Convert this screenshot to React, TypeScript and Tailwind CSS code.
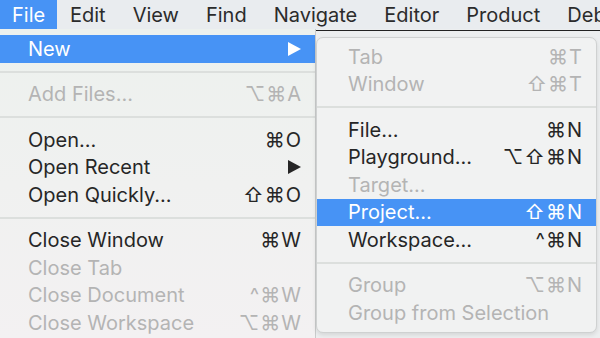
import { ReactNode } from 'react';

type Item = {
  label: string;
  shortcut?: string;
  disabled?: boolean;
  active?: boolean;
  submenu?: boolean;
};

const topMenus = ['Edit', 'View', 'Find', 'Navigate', 'Editor', 'Product', 'Debug'];

const fileMenu: (Item | 'sep')[] = [
  { label: 'New', submenu: true, active: true },
  'sep',
  { label: 'Add Files...', shortcut: '⌥⌘A', disabled: true },
  'sep',
  { label: 'Open...', shortcut: '⌘O' },
  { label: 'Open Recent', submenu: true },
  { label: 'Open Quickly...', shortcut: '⇧⌘O' },
  'sep',
  { label: 'Close Window', shortcut: '⌘W' },
  { label: 'Close Tab', disabled: true },
  { label: 'Close Document', shortcut: '^⌘W', disabled: true },
  { label: 'Close Workspace', shortcut: '⌥⌘W', disabled: true },
];

const newMenu: (Item | 'sep')[] = [
  { label: 'Tab', shortcut: '⌘T', disabled: true },
  { label: 'Window', shortcut: '⇧⌘T', disabled: true },
  'sep',
  { label: 'File...', shortcut: '⌘N' },
  { label: 'Playground...', shortcut: '⌥⇧⌘N' },
  { label: 'Target...', disabled: true },
  { label: 'Project...', shortcut: '⇧⌘N', active: true },
  { label: 'Workspace...', shortcut: '^⌘N' },
  'sep',
  { label: 'Group', shortcut: '⌥⌘N', disabled: true },
  { label: 'Group from Selection', disabled: true },
];

function Arrow({ color }: { color: string }) {
  return (
    <svg width="13" height="14" viewBox="0 0 13 14">
      <polygon points="0,0 13,7 0,14" fill={color} />
    </svg>
  );
}

function Row({ item, padL, padR }: { item: Item; padL: string; padR: string }) {
  const color = item.active ? 'text-white' : item.disabled ? 'text-[#b4b4b4]' : 'text-[#262626]';
  let right: ReactNode = null;
  if (item.submenu) right = <Arrow color={item.active ? '#ffffff' : '#262626'} />;
  else if (item.shortcut) right = <span className="tracking-[1px] mr-[-1px]">{item.shortcut}</span>;
  return (
    <div
      className={`h-[27.5px] flex items-center justify-between ${padL} ${padR} ${color} ${
        item.active ? 'bg-[#4793f5]' : ''
      }`}
    >
      <span>{item.label}</span>
      {right}
    </div>
  );
}

function Sep() {
  return (
    <div className="h-[18px] flex items-center">
      <div className="h-[2px] w-full bg-[#dcdfdd]" />
    </div>
  );
}

export default function App() {
  return (
    <div
      className="w-[600px] h-[338px] overflow-hidden bg-[#eceeef] text-[20px] leading-none"
      style={{ fontFamily: 'Inter, "DejaVu Sans", sans-serif' }}
    >
      <div className="h-[29px] flex items-center bg-[#e9ecef] text-[#2b2b2b] whitespace-nowrap overflow-hidden">
        <div className="h-full w-[57px] shrink-0 bg-[#4793f5] text-white flex items-center pl-[12px]">File</div>
        <div className="flex shrink-0 gap-[27px] pl-[13px]">
          {topMenus.map((m) => (
            <span key={m}>{m}</span>
          ))}
        </div>
      </div>
      <div className="flex">
        <div className="w-[316px] h-[309px] border-r border-[#c9cbcb] bg-gradient-to-b from-[#edf1ee] to-[#f3f1f2] pt-[6px]">
          {fileMenu.map((it, i) =>
            it === 'sep' ? <Sep key={i} /> : <Row key={i} item={it} padL="pl-[28px]" padR="pr-[14px]" />
          )}
        </div>
        <div className="flex-1 flex flex-col">
          <div className="h-px bg-[#eceeef]" />
          <div className="h-px bg-[#222]" />
          <div className="pt-[6px] pr-[3px]">
            <div className="rounded-[7px] border border-[#cfd1d1] bg-[#f1f2f2] py-[5px] overflow-hidden shadow-[0_2px_4px_rgba(0,0,0,0.1)]">
              {newMenu.map((it, i) =>
                it === 'sep' ? <Sep key={i} /> : <Row key={i} item={it} padL="pl-[31px]" padR="pr-[14px]" />
              )}
            </div>
          </div>
        </div>
      </div>
    </div>
  );
}
